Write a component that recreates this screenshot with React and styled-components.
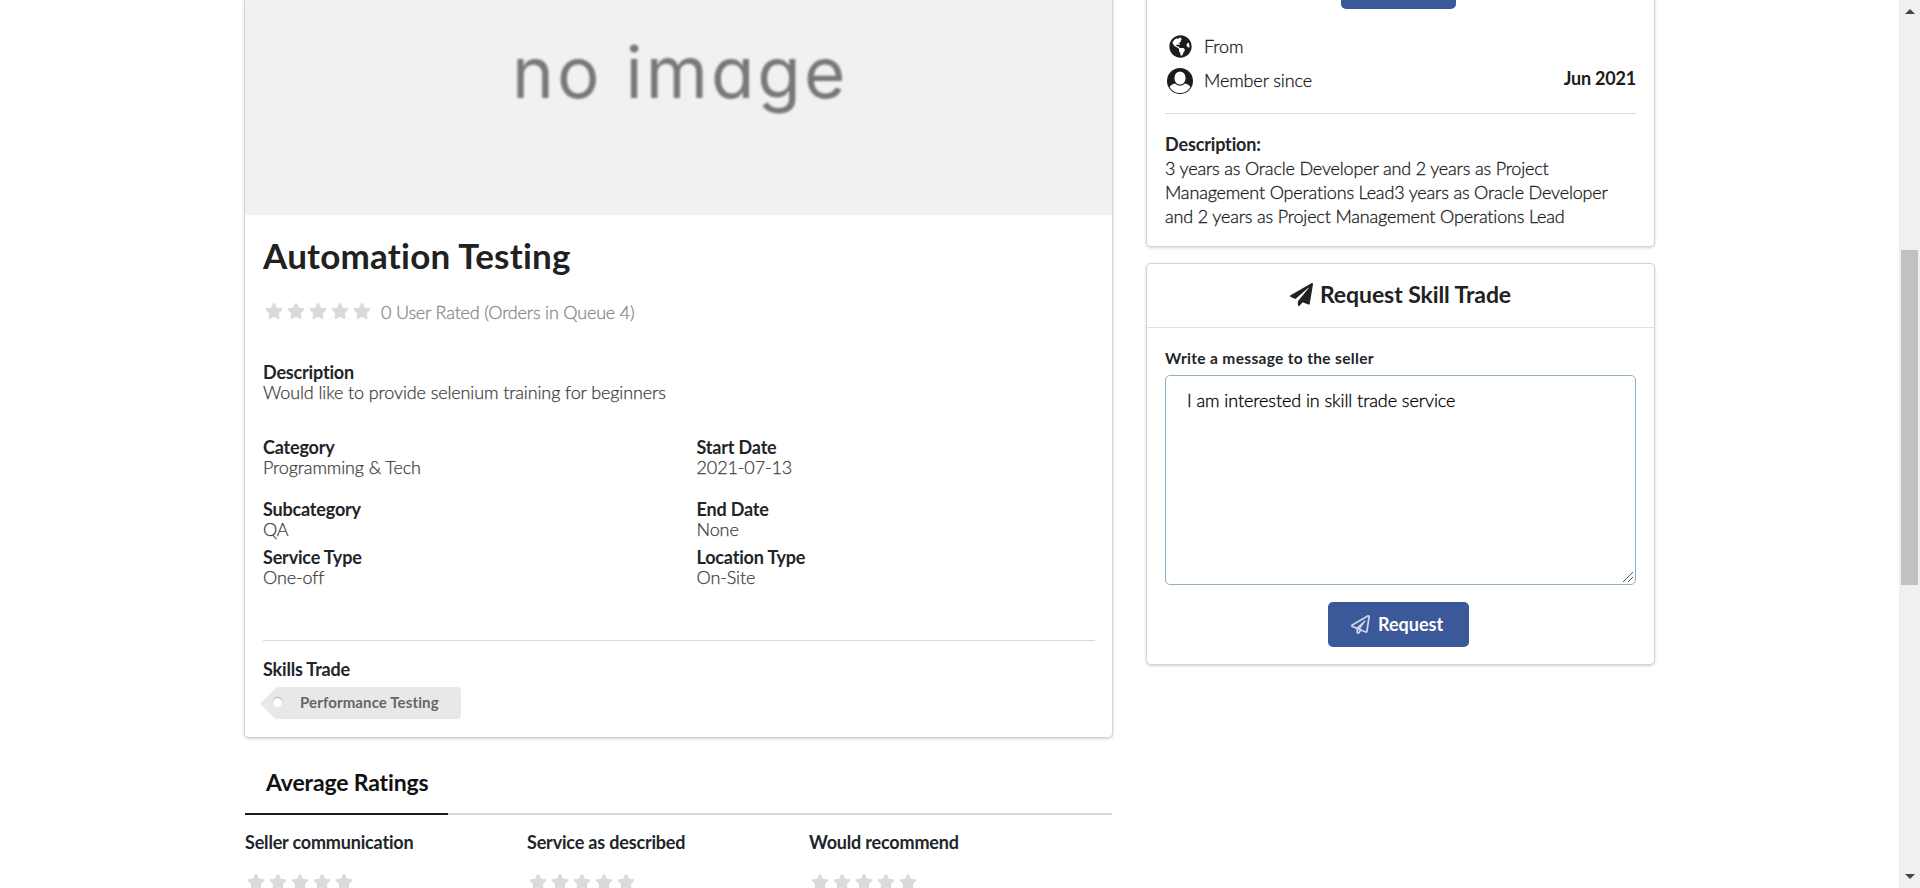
import React from "react";
import styled, { createGlobalStyle } from "styled-components";
import { FaPaperPlane, FaRegPaperPlane, FaGlobeAmericas, FaStar } from "react-icons/fa";

const GlobalStyle = createGlobalStyle`
  * { box-sizing: border-box; }
  html, body { margin: 0; padding: 0; overflow: hidden; }
  body {
    background: #fff;
    color: #212529;
    font-family: Lato, "Open Sans", sans-serif;
    font-size: 18px;
    font-variant-ligatures: none;
    letter-spacing: -0.18px;
  }
  h1, h2, h3, p { margin: 0; font-weight: 700; }
`;

const Window = styled.div`
  display: flex;
  width: 1920px;
  height: 888px;
  overflow: hidden;
`;

const Page = styled.main`
  flex: 1;
  display: flex;
  align-items: flex-start;
  gap: 33px;
  padding-left: 244px;
`;

const MainColumn = styled.div`
  width: 869px;
`;

const SideColumn = styled.div`
  display: flex;
  flex-direction: column;
  gap: 16px;
  width: 509px;
`;

const Card = styled.section`
  background: #fff;
  border: 1px solid #d4d4d5;
  border-top-width: ${(p) => (p.$cut ? 0 : "1px")};
  border-radius: ${(p) => (p.$cut ? "0 0 5px 5px" : "5px")};
  box-shadow: 0 1px 3px 0 #d4d4d5;
`;

const Placeholder = styled.div`
  height: 215px;
  background: #f1f1f1;
`;

const PlaceholderText = styled.div`
  padding: 30px 0 0 267px;
  color: #787878;
  font: 400 71px/85px Inter, sans-serif;
  font-feature-settings: "cv11";
  letter-spacing: 3px;
  white-space: nowrap;
  filter: blur(0.8px);
`;

const Details = styled.div`
  height: 522px;
  padding: 18px 17px 0 18px;
`;

const Title = styled.h1`
  font-size: 35px;
  line-height: 44px;
  letter-spacing: 0.23px;
  color: #212121;
`;

const RatingRow = styled.div`
  display: flex;
  align-items: center;
  height: 24px;
  margin-top: 23px;
  gap: 10px;
  color: #888;
  font-weight: 300;
  -webkit-text-stroke: 0.3px;
`;

const Stars = styled.div`
  display: flex;
  gap: 4px;
  padding: 0 0 2px 2px;
  color: #dadada;
  svg { width: 18px; height: 18px; }
`;

const FieldGrid = styled.div`
  display: grid;
  grid-template-columns: 433.5px 1fr;
  margin-top: ${(p) => p.$top}px;
`;

const Field = styled.div`
  line-height: 20px;
`;

const FieldName = styled.h3`
  font-size: 18px;
  letter-spacing: -0.18px;
  color: #212529;
`;

const FieldValue = styled.p`
  font-weight: 300;
  letter-spacing: -0.12px;
  color: #3c3c3c;
  -webkit-text-stroke: 0.25px;
`;

const Divider = styled.hr`
  height: 1px;
  border: 0;
  margin: ${(p) => p.$space};
  background: #d8d9d9;
`;

const Tag = styled.span`
  position: relative;
  display: block;
  width: 185px;
  height: 32px;
  margin: 8px 0 0 13px;
  padding-left: 24px;
  border-radius: 4px;
  background: #e8e8e8;
  color: #666;
  font-size: 15px;
  font-weight: 700;
  letter-spacing: 0.12px;
  line-height: 31px;
  &::before {
    content: "";
    position: absolute;
    left: -11px;
    top: 4.7px;
    width: 22.6px;
    height: 22.6px;
    background: #e8e8e8;
    transform: rotate(45deg);
  }
  &::after {
    content: "";
    position: absolute;
    left: -3px;
    top: 11px;
    width: 9px;
    height: 9px;
    border-radius: 50%;
    background: #fff;
    box-shadow: 0 -1px 1px #aaa;
  }
`;

const TabBar = styled.div`
  display: flex;
  height: 77px;
  margin: 0 1px;
  border-bottom: 2px solid #dadada;
`;

const Tab = styled.h2`
  width: 203px;
  height: 77px;
  padding: 28px 0 0 21px;
  border-bottom: 2px solid #1b1c1d;
  color: #111;
  font-size: 23px;
  letter-spacing: -0.15px;
  line-height: 32px;
  white-space: nowrap;
`;

const Ratings = styled.div`
  display: grid;
  grid-template-columns: 282px 282px 1fr;
  padding: 16px 0 0 1px;
`;

const RatingItem = styled.div`
  line-height: 22px;
  font-weight: 700;
  letter-spacing: -0.18px;
  ${Stars} { margin-top: 20px; }
`;

const Profile = styled.div`
  height: 246px;
  padding: 0 18px;
`;

const CutButton = styled.div`
  width: 115px;
  height: 9px;
  margin: 0 auto 20px 176px;
  border-radius: 0 0 5px 5px;
  background: #3b5998;
`;

const InfoRow = styled.div`
  display: flex;
  align-items: center;
  height: 34px;
  font-weight: 300;
  letter-spacing: -0.12px;
  color: #1b1c1d;
  -webkit-text-stroke: 0.3px;
  svg { width: ${(p) => p.$icon}px; height: ${(p) => p.$icon}px; flex: none; }
`;

const IconSlot = styled.span`
  display: flex;
  justify-content: center;
  width: 30px;
  margin-right: 9px;
  padding-top: 1px;
`;

const InfoValue = styled.strong`
  margin: 0 0 5px auto;
  font-weight: 700;
  letter-spacing: -0.2px;
  -webkit-text-stroke: 0;
`;

const Bio = styled.p`
  font-weight: 300;
  line-height: 24px;
  letter-spacing: -0.17px;
  white-space: nowrap;
  color: #1b1c1d;
  -webkit-text-stroke: 0.3px;
`;

const BioTitle = styled.h3`
  font-size: 18px;
  line-height: 24px;
  letter-spacing: -0.15px;
`;

const RequestHeader = styled.div`
  display: flex;
  align-items: center;
  justify-content: center;
  gap: 7px;
  height: 64px;
  padding-bottom: 3px;
  border-bottom: 1px solid #e1e2e3;
  color: #212121;
  svg { width: 23px; height: 23px; }
`;

const RequestTitle = styled.h2`
  font-size: 23px;
  line-height: 32px;
  letter-spacing: -0.08px;
`;

const RequestForm = styled.div`
  display: flex;
  flex-direction: column;
  height: 336px;
  padding: 20px 18px 0;
`;

const Label = styled.label`
  font-size: 15.5px;
  font-weight: 700;
  letter-spacing: 0.33px;
  line-height: 20px;
`;

const MessageBox = styled.div`
  position: relative;
  height: 210px;
  margin: 7px 0 17px;
`;

const Message = styled.textarea`
  display: block;
  width: 100%;
  height: 100%;
  padding: 12px 21px;
  border: 1px solid #8fb0c6;
  border-radius: 5px;
  outline: 0;
  resize: none;
  color: #000;
  font: 300 18px/24px Lato, sans-serif;
  font-variant-ligatures: none;
  letter-spacing: -0.08px;
  -webkit-text-stroke: 0.3px;
`;

const Grip = styled.svg`
  position: absolute;
  right: 2px;
  bottom: 2px;
  width: 12px;
  height: 12px;
`;

const Button = styled.button`
  display: flex;
  align-items: center;
  gap: 8px;
  width: 141px;
  height: 45px;
  margin-left: 163px;
  padding: 0 0 1px 23px;
  border: 0;
  border-radius: 5px;
  background: #3b5998;
  color: #fff;
  font: 700 18px Lato, sans-serif;
  svg { width: 19px; height: 19px; opacity: 0.75; }
`;

const Scrollbar = styled.div`
  display: flex;
  flex-direction: column;
  align-items: center;
  justify-content: space-between;
  width: 21px;
  height: 888px;
  padding: 9px 0;
  background: #f0f0f0;
`;

const Arrow = styled.span`
  border: 5px solid transparent;
  border-top: ${(p) => (p.$down ? "5px solid #444" : "0")};
  border-bottom: ${(p) => (p.$down ? "0" : "5px solid #444")};
`;

const Thumb = styled.div`
  width: 17px;
  height: 335px;
  margin-bottom: 53px;
  background: #c1c1c1;
`;

const PersonIcon = () => (
  <svg viewBox="0 0 26 26">
    <circle cx="13" cy="13" r="13" fill="#1b1c1d" />
    <path d="M8.500 15.300C5.500 16.300 3.500 17.300 2.600 19A11.900 11.900 0 0 0 23.400 19C22.500 17.300 20.500 16.300 17.500 15.300Z" fill="#fff" />
    <ellipse cx="13" cy="10" rx="6.200" ry="7.100" fill="#fff" stroke="#1b1c1d" strokeWidth="1.200" />
  </svg>
);

const StarRow = () => (
  <Stars>{[1, 2, 3, 4, 5].map((n) => <FaStar key={n} />)}</Stars>
);

const Entry = ({ name, value }) => (
  <Field>
    <FieldName>{name}</FieldName>
    <FieldValue>{value}</FieldValue>
  </Field>
);

export default function App() {
  return (
    <Window>
      <GlobalStyle />
      <Page>
        <MainColumn>
          <Card $cut>
            <Placeholder><PlaceholderText>no image</PlaceholderText></Placeholder>
            <Details>
              <Title>Automation Testing</Title>
              <RatingRow><StarRow />0 User Rated (Orders in Queue 4)</RatingRow>
              <FieldGrid $top={38}>
                <Entry name="Description" value="Would like to provide selenium training for beginners" />
              </FieldGrid>
              <FieldGrid $top={35}>
                <Entry name="Category" value="Programming & Tech" />
                <Entry name="Start Date" value="2021-07-13" />
              </FieldGrid>
              <FieldGrid $top={22}>
                <Entry name="Subcategory" value="QA" />
                <Entry name="End Date" value="None" />
              </FieldGrid>
              <FieldGrid $top={8}>
                <Entry name="Service Type" value="One-off" />
                <Entry name="Location Type" value="On-Site" />
              </FieldGrid>
              <Divider $space="53px 0 18px" />
              <Field>
                <FieldName>Skills Trade</FieldName>
              </Field>
              <Tag>Performance Testing</Tag>
            </Details>
          </Card>
          <TabBar><Tab>Average Ratings</Tab></TabBar>
          <Ratings>
            {["Seller communication", "Service as described", "Would recommend"].map((name) => (
              <RatingItem key={name}>{name}<StarRow /></RatingItem>
            ))}
          </Ratings>
        </MainColumn>
        <SideColumn>
          <Card $cut>
            <Profile>
              <CutButton />
              <InfoRow $icon={23}><IconSlot><FaGlobeAmericas /></IconSlot>From</InfoRow>
              <InfoRow $icon={26}>
                <IconSlot><PersonIcon /></IconSlot>Member since
                <InfoValue>Jun 2021</InfoValue>
              </InfoRow>
              <Divider $space="16px 0 18px" />
              <BioTitle>Description:</BioTitle>
              <Bio>
                3 years as Oracle Developer and 2 years as Project<br />
                Management Operations Lead3 years as Oracle Developer<br />
                and 2 years as Project Management Operations Lead
              </Bio>
            </Profile>
          </Card>
          <Card>
            <RequestHeader><FaPaperPlane /><RequestTitle>Request Skill Trade</RequestTitle></RequestHeader>
            <RequestForm>
              <Label>Write a message to the seller</Label>
              <MessageBox>
                <Message spellCheck={false} defaultValue="I am interested in skill trade service" />
                <Grip viewBox="0 0 12 12" stroke="#555" strokeWidth="1">
                  <path d="M1 11L11 1M6 11L11 6" />
                </Grip>
              </MessageBox>
              <Button><FaRegPaperPlane />Request</Button>
            </RequestForm>
          </Card>
        </SideColumn>
      </Page>
      <Scrollbar>
        <Arrow />
        <Thumb />
        <Arrow $down />
      </Scrollbar>
    </Window>
  );
}
